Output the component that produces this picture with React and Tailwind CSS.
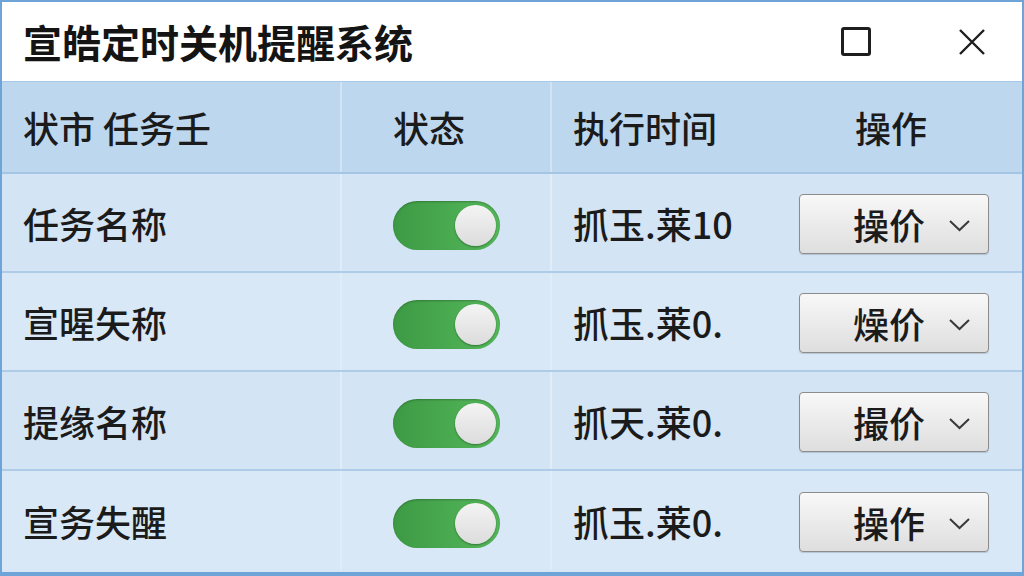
import { useState } from "react";

const rows = [
  { name: "任务名称", time: "抓玉.莱10", action: "操价" },
  { name: "宣暒矢称", time: "抓玉.莱0.", action: "燥价" },
  { name: "提缘名称", time: "抓天.莱0.", action: "撮价" },
  { name: "宣务失醒", time: "抓玉.莱0.", action: "操作" },
];

function Toggle({ on, onChange }) {
  return (
    <button
      onClick={onChange}
      className={`flex items-center w-[107px] h-[49px] mt-[5px] rounded-full p-[4px] shadow-[inset_0_1px_2px_rgba(0,0,0,0.25)] ${
        on
          ? "justify-end bg-gradient-to-r from-[#3d9a44] to-[#55b85b]"
          : "justify-start bg-gradient-to-r from-[#b5b5b5] to-[#cfcfcf]"
      }`}
    >
      <span className="block w-[41px] h-[41px] rounded-full bg-gradient-to-b from-[#f4f4f4] to-[#dcdcdc] shadow-[0_1px_2px_rgba(0,0,0,0.35)]" />
    </button>
  );
}

function ActionButton({ label }) {
  return (
    <button className="flex items-center justify-end gap-[22px] w-[190px] h-[60px] mt-[2px] pr-[16px] rounded-[4px] border border-[#8c8c8c] bg-gradient-to-b from-[#f8f8f8] to-[#dedede] shadow-[0_1px_1px_rgba(0,0,0,0.15)]">
      <span className="text-[36px] font-medium leading-none text-[#1b1b1b]">{label}</span>
      <svg width="25" height="13" viewBox="0 0 25 13" className="mt-[3px]">
        <polyline
          points="3,2 12.5,11 22,2"
          fill="none"
          stroke="#3a3a3a"
          strokeWidth="2"
        />
      </svg>
    </button>
  );
}

export default function App() {
  const [states, setStates] = useState([true, true, true, true]);

  return (
    <div
      className="w-[1024px] h-[576px] bg-[#6fa4d8] pl-[2px] pr-[2px] pt-[2px] pb-[4px] overflow-hidden"
      style={{ fontFamily: '"Noto Sans CJK SC", "Noto Sans", sans-serif' }}
    >
      <div className="flex flex-col w-full h-full bg-[#d6e6f5]">
        {/* title bar */}
        <div className="flex items-center h-[80px] bg-white border-b border-[#a9c9e8]">
          <div className="pl-[21px] text-[39px] font-bold leading-none text-[#141414]">
            宣皓定时关机提醒系统
          </div>
          <div className="ml-auto flex items-center gap-[87px] pr-[36px]">
            <span className="block w-[30px] h-[29px] border-[3px] border-[#1e1e1e] rounded-[3px]" />
            <svg width="28" height="28" viewBox="0 0 28 28">
              <path d="M2 2 L26 26 M26 2 L2 26" stroke="#1e1e1e" strokeWidth="2.4" />
            </svg>
          </div>
        </div>

        {/* header */}
        <div className="flex h-[92px] bg-[#bdd7ef] border-b-2 border-[#a6c5e4] text-[36px] font-medium leading-none text-[#1b1b1b]">
          <div className="flex items-center w-[340px] pl-[21px] border-r-2 border-[#d2e3f3]">
            状市 任务壬
          </div>
          <div className="flex items-center w-[210px] pl-[51px] border-r-2 border-[#d2e3f3]">
            状态
          </div>
          <div className="flex items-center w-[245px] pl-[21px]">执行时间</div>
          <div className="flex items-center flex-1 pl-[58px]">操作</div>
        </div>

        {/* rows */}
        {rows.map((row, i) => (
          <div
            key={i}
            className={`flex h-[99px] text-[36px] font-medium leading-none text-[#1b1b1b] ${
              i < rows.length - 1 ? "border-b-2 border-[#aecbe7]" : ""
            } ${i % 2 === 0 ? "bg-[#d3e4f4]" : "bg-[#d9e8f6]"}`}
          >
            <div className="flex items-center w-[340px] pl-[21px] border-r-2 border-[#e0ecf8]">
              {row.name}
            </div>
            <div className="flex items-center w-[210px] pl-[51px] border-r-2 border-[#e0ecf8]">
              <Toggle
                on={states[i]}
                onChange={() =>
                  setStates((s) => s.map((v, j) => (j === i ? !v : v)))
                }
              />
            </div>
            <div className="flex items-center w-[245px] pl-[21px]">{row.time}</div>
            <div className="flex items-center flex-1 pl-[2px]">
              <ActionButton label={row.action} />
            </div>
          </div>
        ))}
      </div>
    </div>
  );
}
